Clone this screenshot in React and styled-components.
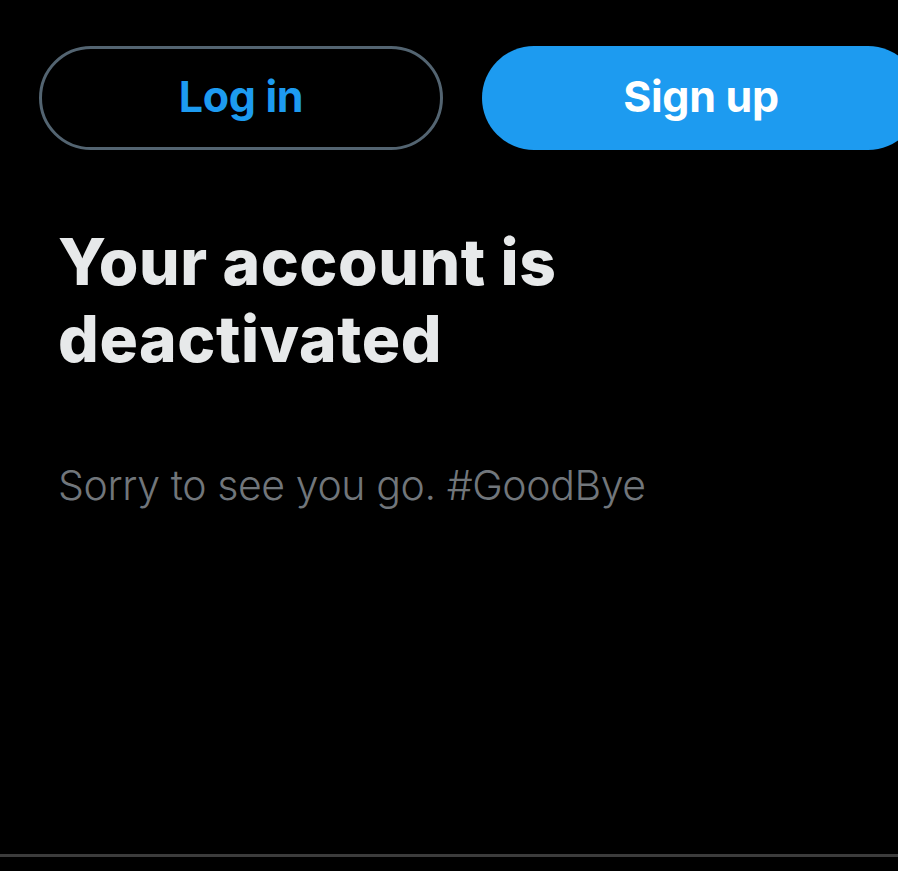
import React from "react";
import styled, { createGlobalStyle } from "styled-components";

const Global = createGlobalStyle`
  html, body { margin: 0; padding: 0; background: #000; }
  body { overflow: hidden; width: 898px; height: 871px; font-family: Inter, "Open Sans", sans-serif; }
`;

const Page = styled.div`
  width: 898px;
  height: 871px;
  background: #000;
  display: flex;
  flex-direction: column;
  overflow: hidden;
`;

const ButtonRow = styled.div`
  display: flex;
  gap: 39px;
  padding: 46px 0 0 39px;
`;

const PillButton = styled.button`
  flex: none;
  width: ${(p) => p.$width}px;
  height: 104px;
  border-radius: 52px;
  box-sizing: border-box;
  font-family: Inter, "Open Sans", sans-serif;
  font-weight: 700;
  font-size: 43px;
  letter-spacing: -0.3px;
  display: flex;
  align-items: center;
  justify-content: center;
  padding: 0 0 4px;
  border: ${(p) => (p.$primary ? "none" : "3px solid #536471")};
  background: ${(p) => (p.$primary ? "#1d9bf0" : "transparent")};
  color: ${(p) => (p.$primary ? "#fff" : "#1d9bf0")};
`;

const Content = styled.div`
  flex: 1;
  display: flex;
  flex-direction: column;
  padding: 73px 0 0 58px;
`;

const Title = styled.h1`
  margin: 0;
  font-family: Inter, sans-serif;
  font-weight: 800;
  font-size: 64px;
  line-height: 77px;
  color: #e7e9ea;
  letter-spacing: 0.6px;
`;

const Subtitle = styled.p`
  margin: 83px 0 0;
  font-family: Inter, sans-serif;
  font-weight: 300;
  font-size: 41px;
  line-height: 50px;
  color: #71767b;
  letter-spacing: -0.4px;
`;

const Divider = styled.div`
  height: 3px;
  background: #3c3c3c;
  margin-bottom: 14px;
`;

export default function App() {
  return (
    <Page>
      <Global />
      <ButtonRow>
        <PillButton $width={404}>Log in</PillButton>
        <PillButton $primary $width={438}>Sign up</PillButton>
      </ButtonRow>
      <Content>
        <Title>
          Your account is
          <br />
          deactivated
        </Title>
        <Subtitle>Sorry to see you go. #GoodBye</Subtitle>
      </Content>
      <Divider />
    </Page>
  );
}
